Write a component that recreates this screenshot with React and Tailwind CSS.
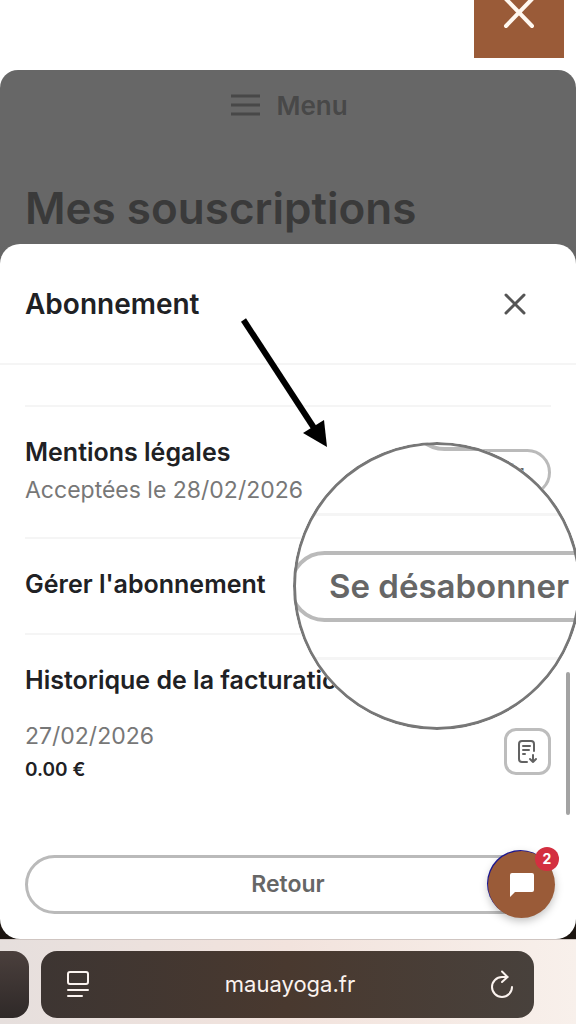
import React from 'react';
import { X } from 'lucide-react';

function ReceiptIcon() {
  return (
    <svg width="24" height="28" viewBox="0 0 24 28" fill="none" stroke="#626262" strokeWidth="2" strokeLinecap="round" strokeLinejoin="round">
      <path d="M11 24H6a3 3 0 0 1-3-3V6a3 3 0 0 1 3-3h9a3 3 0 0 1 3 3v7" />
      <path d="M7 8h7M7 12h6M7 16h2" />
      <path d="M17 17v7M14 21l3 3 3-3" />
    </svg>
  );
}

function ReaderIcon() {
  return (
    <svg width="24" height="30" viewBox="0 0 24 30" fill="none" stroke="#fbf3ef" strokeWidth="2" strokeLinecap="round">
      <rect x="2" y="2" width="20" height="12" rx="2" />
      <path d="M2 20h20M2 26h14" />
    </svg>
  );
}

function ReloadIcon() {
  return (
    <svg width="24" height="30" viewBox="0 0 24 30" fill="none" stroke="#fbf3ef" strokeWidth="2" strokeLinecap="round" strokeLinejoin="round">
      <path d="M17.5 7H12A10 10 0 1 0 22 17" />
      <path d="M12 1.500l5.500 5.500L12 12" />
    </svg>
  );
}

function Magnifier() {
  return (
    <div className="absolute top-[198px] left-[293px] size-[288px] overflow-hidden rounded-full bg-white">
      <div className="absolute -top-[62px] left-[116px] h-[71px] w-[300px] rounded-full border-4 border-[#bababa]" />
      <div className="flex h-full flex-col justify-center">
        <div className="h-[3px] bg-[#f5f5f5]" />
        <button className="my-[35px] -ml-1 h-[71px] w-[340px] shrink-0 rounded-full border-4 border-[#bababa] pl-9 text-left text-[33px] leading-10 font-semibold text-[#666]">
          Se désabonner
        </button>
        <div className="h-[3px] bg-[#f5f5f5]" />
      </div>
      <div className="absolute inset-0 rounded-full border-[3px] border-[#777]" />
    </div>
  );
}

function Arrow() {
  return (
    <svg className="absolute top-[70px] left-[236px]" width="96" height="140" viewBox="0 0 96 140">
      <path d="M7.500 6L80 117" stroke="#000" strokeWidth="6" />
      <path d="M91 133L67 119L88 106Z" fill="#000" />
    </svg>
  );
}

function ChatButton() {
  return (
    <button aria-label="Chat" className="absolute right-[21px] bottom-[21px] flex size-[67px] items-center justify-center rounded-full bg-[#9a5b38] shadow-[-1px_-1px_0_#1a1690,0_3px_8px_rgba(0,0,0,0.25)]">
      <svg width="26" height="26" viewBox="0 0 26 26" fill="#fff">
        <path d="M3 1h20a2 2 0 0 1 2 2v15a2 2 0 0 1-2 2H6l-5 5V3a2 2 0 0 1 2-2z" />
      </svg>
      <span className="absolute -top-1 -right-1 flex size-6 items-center justify-center rounded-full bg-[#d32f40] text-sm font-bold text-white">
        2
      </span>
    </button>
  );
}

function SubscriptionSheet() {
  return (
    <section className="relative rounded-[20px] bg-white font-['Inter',sans-serif] text-[#202124]">
      <header className="flex h-[121px] items-center justify-between border-b-2 border-[#f5f5f5] pr-[43px] pl-[25px]">
        <h2 className="text-[28px] font-semibold">Abonnement</h2>
        <button aria-label="Fermer" className="text-[#555]">
          <X size={36} strokeWidth={2} />
        </button>
      </header>

      <div className="px-[25px] pt-10">
        <div className="flex h-[132px] items-start justify-between border-t-2 border-[#f5f5f5] pt-[29px]">
          <div>
            <h3 className="text-[25px] leading-8 font-semibold">Mentions légales</h3>
            <p className="mt-1.5 text-[23px] leading-8 text-[#777]">Acceptées le 28/02/2026</p>
          </div>
          <button className="mt-[13px] h-[47px] rounded-full border-[3px] border-[#bababa] px-6 text-[23px] leading-6 font-semibold text-[#666]">
            Voir
          </button>
        </div>
        <div className="h-24 border-t-2 border-[#f5f5f5] pt-[29px]">
          <h3 className="text-[25px] leading-8 font-semibold">Gérer l'abonnement</h3>
        </div>
        <div className="border-t-2 border-[#f5f5f5] pt-[29px]">
          <h3 className="text-[25px] leading-8 font-semibold">Historique de la facturation</h3>
          <div className="mt-6 flex items-start justify-between">
            <div>
              <p className="text-[23px] leading-8 text-[#777]">27/02/2026</p>
              <p className="text-[19px] leading-9 font-semibold">0.00 €</p>
            </div>
            <button aria-label="Télécharger la facture" className="mt-2 flex size-[47px] items-center justify-center rounded-xl border-[3px] border-[#bdbdbd]">
              <ReceiptIcon />
            </button>
          </div>
        </div>
      </div>

      <footer className="px-[25px] pt-[67px] pb-[25px]">
        <button className="h-[59px] w-full rounded-full border-[3px] border-[#bababa] text-[23px] font-semibold text-[#666]">
          Retour
        </button>
      </footer>

      <div className="absolute top-[428px] right-[6px] h-[143px] w-1 rounded-full bg-[#a3a3a3]" />
      <Magnifier />
      <Arrow />
      <ChatButton />
    </section>
  );
}

function BrowserBar() {
  return (
    <nav className="flex flex-1 gap-3 border-t border-[#cfc5c1] bg-linear-to-r from-[#e6dfdd] via-[#f2e3dd] to-[#f8f0eb] pt-[11px] pb-1.5">
      <div className="h-[67px] w-[29px] rounded-r-2xl bg-linear-to-b from-[#4b403d] to-[#2f2928]" />
      <div className="mr-[42px] flex h-[67px] flex-1 items-center justify-between rounded-2xl bg-linear-to-r from-[#3d3532] via-[#49392f] to-[#48413c] pr-5 pl-[25px]">
        <button aria-label="Lecteur">
          <ReaderIcon />
        </button>
        <span className="font-['Inter',sans-serif] text-[22px] text-[#fbf3ef]">mauayoga.fr</span>
        <button aria-label="Recharger">
          <ReloadIcon />
        </button>
      </div>
    </nav>
  );
}

export default function App() {
  return (
    <div className="flex min-h-screen flex-col overflow-hidden bg-white font-['Inter',sans-serif]">
      <div className="flex h-[70px] items-start justify-end pr-3">
        <button aria-label="Fermer le menu" className="flex h-[58px] w-[90px] justify-center bg-[#9a5b38] text-white">
          <svg width="36" height="30" viewBox="0 0 36 30" stroke="#fff8f0" strokeWidth="4" strokeLinecap="round">
            <path d="M5-1L31 26M31-1L5 26" />
          </svg>
        </button>
      </div>

      <div className="rounded-t-[18px] bg-[#676767]">
        <button className="flex h-[70px] w-full items-center justify-center gap-4 pl-[3px] text-[#484848]">
          <svg width="29" height="24" viewBox="0 0 29 24" stroke="currentColor" strokeWidth="3">
            <path d="M0 3h29M0 12h29M0 21h29" />
          </svg>
          <span className="text-[26px] font-semibold">Menu</span>
        </button>
        <h1 className="h-[104px] px-[25px] pt-10 text-[44px] leading-[56px] font-semibold text-[#3a3a3a]">Mes souscriptions</h1>
      </div>

      <div className="bg-linear-to-b from-[#676767] to-[#1c1510]">
        <SubscriptionSheet />
      </div>

      <BrowserBar />
    </div>
  );
}
